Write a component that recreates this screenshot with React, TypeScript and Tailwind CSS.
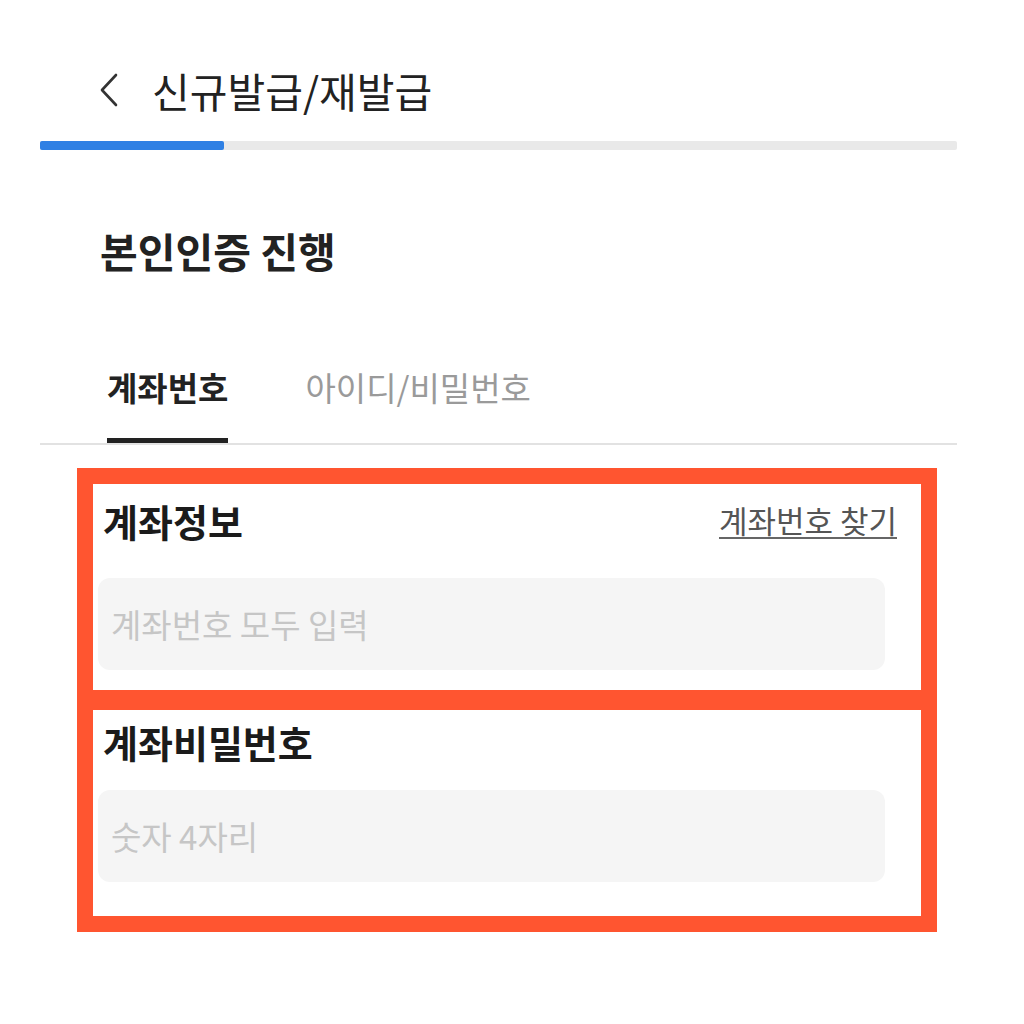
import React from 'react';

const font = { fontFamily: '"Noto Sans CJK KR", "Noto Sans", sans-serif' };

export default function App() {
  return (
    <div className="w-[1024px] h-[1024px] bg-white overflow-hidden" style={font}>
      {/* Header */}
      <div className="pt-[60px] h-[120px] pl-[100px] flex items-center gap-[34px]">
        <svg width="18" height="34" viewBox="0 0 18 34" className="shrink-0">
          <polyline points="16,2 2,17 16,32" fill="none" stroke="#333" strokeWidth="2.6" strokeLinecap="round" strokeLinejoin="round" />
        </svg>
        <span className="text-[41px] text-[#222] leading-none">신규발급/재발급</span>
      </div>

      {/* Progress */}
      <div className="mt-[21px] ml-[40px] w-[917px] h-[9px] bg-[#e9e9e9] rounded-[2px] flex">
        <div className="w-[184px] h-full bg-[#2f80e4] rounded-[2px]" />
      </div>

      {/* Section title */}
      <div className="mt-[60px] h-[80px] pl-[100px] flex items-center">
        <span className="text-[41px] font-bold text-[#222] leading-none">본인인증 진행</span>
      </div>

      {/* Tabs */}
      <div className="mt-[55px] ml-[40px] w-[917px] border-b-2 border-[#e2e2e2] flex pl-[67px] gap-[77px]">
        <div className="h-[98px] pb-[8px] flex items-center border-b-[5px] border-[#222] -mb-[2px]">
          <span className="text-[33px] font-bold text-[#222] leading-none">계좌번호</span>
        </div>
        <div className="h-[98px] pb-[13px] flex items-center">
          <span className="text-[33px] text-[#9a9a9a] leading-none">아이디/비밀번호</span>
        </div>
      </div>

      {/* Form boxes */}
      <div className="mt-[23px] pl-[77px]">
        <div className="w-[860px] border-[16px] border-[#ff5530] pb-[20px]">
          <div className="h-[74px] flex items-center justify-between pl-[10px] pr-[24px]">
            <span className="text-[38px] font-bold text-[#1b1b1b] leading-none">계좌정보</span>
            <span className="text-[31px] text-[#555] leading-none pb-[2px] border-b-2 border-[#666]">계좌번호 찾기</span>
          </div>
          <div className="mt-[20px] ml-[5px] mr-[36px] h-[92px] rounded-[12px] bg-[#f5f5f5] flex items-center pl-[13px]">
            <span className="text-[33px] text-[#c6c6c6] leading-none">계좌번호 모두 입력</span>
          </div>
        </div>

        <div className="-mt-[12px] w-[860px] border-[16px] border-[#ff5530] pb-[34px]">
          <div className="h-[64px] flex items-center pl-[10px]">
            <span className="text-[38px] font-bold text-[#1b1b1b] leading-none">계좌비밀번호</span>
          </div>
          <div className="mt-[16px] ml-[5px] mr-[36px] h-[92px] rounded-[12px] bg-[#f5f5f5] flex items-center pl-[13px]">
            <span className="text-[33px] text-[#c6c6c6] leading-none">숫자 4자리</span>
          </div>
        </div>
      </div>
    </div>
  );
}
